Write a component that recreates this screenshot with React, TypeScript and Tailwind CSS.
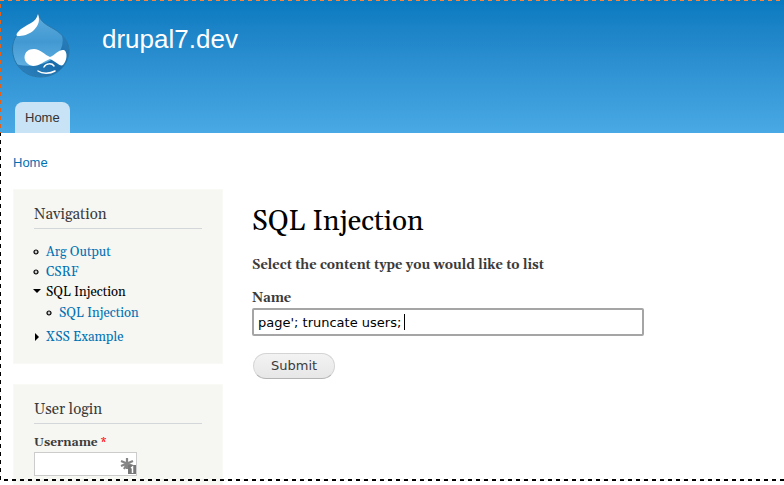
import { useState } from "react";
import type { ReactNode } from "react";

const serif = "font-[Georgia,Gelasio,'Liberation_Serif',serif]";
const sans = "font-['Liberation_Sans',Arial,sans-serif]";
const input = "font-['DejaVu_Sans',Verdana,sans-serif]";

function Druplicon() {
  return (
    <svg viewBox="0 0 60 66" className="h-[66px] w-[60px]" aria-hidden="true">
      <defs>
        <linearGradient id="drop" x1="0" y1="0" x2="0" y2="1">
          <stop offset="0" stopColor="#5fadde" />
          <stop offset=".45" stopColor="#4299d2" />
          <stop offset="1" stopColor="#6cb9e8" />
        </linearGradient>
        <linearGradient id="shade" x1="1" y1="0" x2="0" y2="1">
          <stop offset="0" stopColor="#2a80bd" />
          <stop offset=".5" stopColor="#1a6dab" />
          <stop offset="1" stopColor="#3086c0" />
        </linearGradient>
        <clipPath id="body">
          <path d="M27 1C29 10 36 13 43 17C53 23 58 31 58 38C58 54 45 65 29.500 65C13 65 1.500 52 1.500 37C1.500 26 8 19 16 14C22 10 26 7 27 1Z" />
        </clipPath>
      </defs>
      <g clipPath="url(#body)">
        <path d="M0 0H60V66H0Z" fill="url(#drop)" />
        <path d="M50 20C56 36 45 48 31 52C19 55 8 54 3 51C10 62 22 66 32 65C49 64 59 54 59 37C58 29 55 22 50 20Z" fill="url(#shade)" />
      </g>
      <path d="M27 1C29 10 36 13 43 17C53 23 58 31 58 38C58 54 45 65 29.500 65C13 65 1.500 52 1.500 37C1.500 26 8 19 16 14C22 10 26 7 27 1Z" fill="none" stroke="#2877aa" />
      <path d="M27 2C29 8 28 13 23 18C18 23 11 24 7 24C5 24 5 22 7 20C10 16 15 14 20 11C24 9 26 6 27 2Z" fill="#fff" />
      <path d="M23 37C29 37 34 43 39 45C44 43 48 37 53 38C57 40 56 49 52 53C49 55 44 49 39 47C33 49 29 54 22 54C17 53 13.500 50 13.500 45C14 40 17 37 23 37Z" fill="#fff" />
      <path d="M33 55C35 51 41 51 43 54M27 59C31 62 39 62 44 59" fill="none" stroke="#fff" strokeWidth="1.500" strokeLinecap="round" />
    </svg>
  );
}

function Block({ title, children }: { title: string; children: ReactNode }) {
  return (
    <section className="border border-[#f9f9f6] bg-[#f6f6f2] px-5 pt-[15px] pb-4">
      <h2 className="border-b border-[#d3d7d9] pb-[3px] text-[15px] leading-5 text-[#3b3b3b]">{title}</h2>
      {children}
    </section>
  );
}

function Leaf() {
  return (
    <svg viewBox="0 0 6 6" className="h-[6px] w-[6px] shrink-0" aria-hidden="true">
      <circle cx="3" cy="3" r="2" fill="#ccc" stroke="#000" strokeWidth="1.200" />
    </svg>
  );
}

function Arrow({ open }: { open?: boolean }) {
  return (
    <svg viewBox="0 0 8 8" className="h-2 w-2 shrink-0" aria-hidden="true">
      <path d={open ? "M0 1H8L4 5Z" : "M2 0L6 4L2 8Z"} />
    </svg>
  );
}

function Item({ mark, label, active }: { mark: ReactNode; label: string; active?: boolean }) {
  return (
    <div className="flex h-5 items-center">
      <span className="flex w-[13px] items-center">{mark}</span>
      <a href="#" className={active ? "text-black" : "text-[#0071b3]"}>{label}</a>
    </div>
  );
}

export default function App() {
  const [name, setName] = useState("page'; truncate users;");
  return (
    <div className={`relative h-screen overflow-hidden bg-white text-[#3b3b3b] ${serif}`}>
      <header className={`bg-linear-to-b from-[#0779bf] to-[#48a9e4] ${sans}`}>
        <div className="flex h-[102px] gap-[31px] pt-3 pl-[11px]">
          <Druplicon />
          <h1 className="pt-3 text-[26px] leading-[30px] text-white">
            <a href="#">drupal7.dev</a>
          </h1>
        </div>
        <nav className="flex pl-[15px]">
          <a href="#" className="rounded-t-lg bg-[#c8e3f5] px-[10px] text-[13px] leading-[31px] text-[#333]">Home</a>
        </nav>
      </header>

      <nav className={`px-[13px] pt-5 pb-[17px] text-[13px] leading-[19px] ${sans}`}>
        <a href="#" className="text-[#0071b3]">Home</a>
      </nav>

      <div className="flex gap-[29px] pl-[13px]">
        <aside className="flex w-[210px] shrink-0 flex-col gap-5">
          <Block title="Navigation">
            <ul className="-ml-px pt-[13px] text-[13px] leading-5">
              <li><Item mark={<Leaf />} label="Arg Output" /></li>
              <li><Item mark={<Leaf />} label="CSRF" /></li>
              <li>
                <Item mark={<Arrow open />} label="SQL Injection" active />
                <ul className="pt-px pb-1 pl-[13px]">
                  <li><Item mark={<Leaf />} label="SQL Injection" /></li>
                </ul>
              </li>
              <li><Item mark={<Arrow />} label="XSS Example" /></li>
            </ul>
          </Block>
          <Block title="User login">
            <form className="pt-[10px]">
              <label htmlFor="username" className="block text-[12px] leading-[18px] font-bold">
                Username <span className="font-normal text-[#f00]">*</span>
              </label>
              <div className="relative w-[103px]">
                <input id="username" className={`block h-6 w-full border border-[#ccc] bg-white px-1 text-[13px] ${input}`} />
                <svg viewBox="0 0 17 18" className="absolute right-0 bottom-px h-[18px] w-[17px]" aria-hidden="true">
                  <path d="M7 1V12M1 4L13 9M13 4L1 9M4 12L7 7L10 12" fill="none" stroke="#858585" strokeWidth="2.200" />
                  <path d="M8 8H16V17H8Z" fill="#777" />
                  <path d="M11 11L12.500 10V16" fill="none" stroke="#fff" strokeWidth="1.500" />
                </svg>
              </div>
            </form>
          </Block>
        </aside>

        <main className="min-w-0 flex-1 pt-[15px]">
          <h1 className="text-[28px] leading-9 text-black">SQL Injection</h1>
          <form className="pt-[15px] text-[13px] leading-5" onSubmit={(e) => e.preventDefault()}>
            <p className="font-bold">Select the content type you would like to list</p>
            <label htmlFor="name" className="block pt-[13px] font-bold">Name</label>
            <div className="relative">
              <input
                id="name"
                value={name}
                onChange={(e) => setName(e.target.value)}
                className={`block h-7 w-[392px] max-w-full rounded-xs border-2 border-[#a5a5a5] bg-white px-1 text-[13px] text-black outline-none ${input}`}
              />
              <span className="pointer-events-none absolute top-[6px] left-[152px] h-4 w-px bg-black" />
            </div>
            <button type="submit" className={`mt-[17px] ml-px block h-[26px] rounded-full border border-[#d4d4d4] border-b-[#b4b4b4] bg-linear-to-b from-[#f3f3f3] to-[#e7e7e7] px-[17px] text-[13px] text-[#3a3a3a] ${input}`}>
              Submit
            </button>
          </form>
        </main>
      </div>

      <div className="pointer-events-none absolute inset-x-0 top-0 h-px bg-[repeating-linear-gradient(90deg,#f8863f_0_4px,transparent_4px_8px)]" />
      <div className="pointer-events-none absolute top-0 left-0 h-[480px] w-px bg-[repeating-linear-gradient(180deg,transparent_0_4px,#000_4px_8px)]" />
      <div className="pointer-events-none absolute top-0 left-0 h-[133px] w-px bg-[repeating-linear-gradient(180deg,transparent_0_4px,#e0621d_4px_8px)]" />
      <div className="pointer-events-none absolute inset-x-0 top-[479px] h-[2px] bg-[repeating-linear-gradient(90deg,transparent_0_4px,#000_4px_8px)]" />
    </div>
  );
}
